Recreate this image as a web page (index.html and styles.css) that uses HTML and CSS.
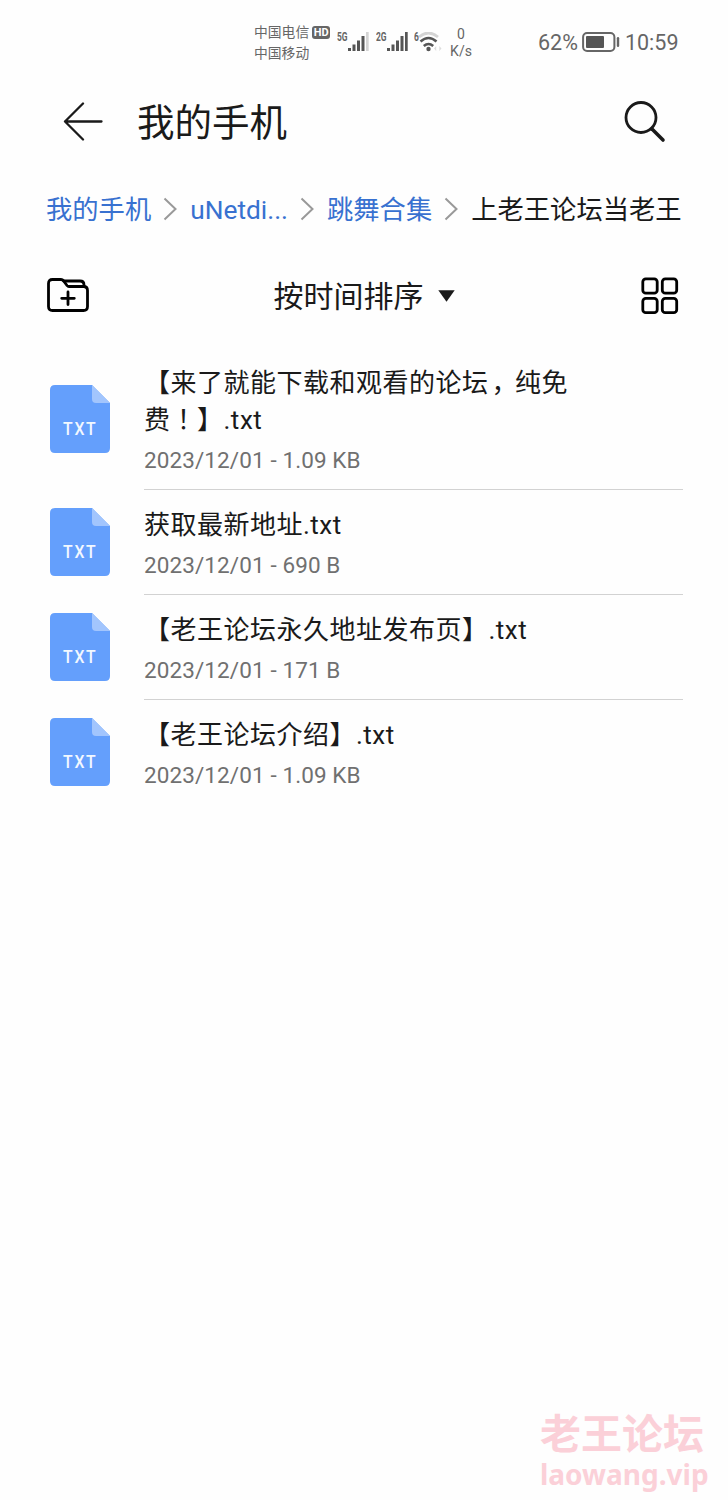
FILE: index.html
```
<!DOCTYPE html>
<html lang="zh-CN">
<head>
  <meta charset="UTF-8">
  <title>我的手机</title>
  <link rel="stylesheet" href="styles.css">
</head>
<body>

<div class="status-bar">
  <div class="carriers">
    <div class="carrier">中国电信<span class="hd">HD</span></div>
    <div class="carrier">中国移动</div>
  </div>
  <div class="signal">
    <span class="net">5G</span>
    <svg width="22" height="20" viewBox="0 0 22 20">
      <path d="M0 16h3v3H0zM4.500 12.500h3V19h-3zM9 8.500h3V19H9zM13.500 4h3v15h-3z" fill="#555"/>
      <path d="M18 0h2.700v19H18z" fill="#d4d4d4"/>
    </svg>
  </div>
  <div class="signal signal-2">
    <span class="net">2G</span>
    <svg width="22" height="20" viewBox="0 0 22 20">
      <path d="M0 16h3v3H0zM4.500 12.500h3V19h-3zM9 8.500h3V19H9zM13.500 4h3v15h-3zM18 0h2.700v19H18z" fill="#555"/>
    </svg>
  </div>
  <div class="signal wifi">
    <span class="net">6</span>
    <svg width="24" height="20" viewBox="0 0 24 20">
      <path d="M1 5Q10.500-3 20 5" fill="none" stroke="#d4d4d4" stroke-width="2.800"/>
      <path d="M2.500 9.500Q10.500 2.500 18.500 9.500M5.800 14Q10.500 10 15.200 14" fill="none" stroke="#555" stroke-width="2.600"/>
      <circle cx="10.500" cy="17" r="2.200" fill="#555"/>
      <path d="M16 16.500l2.200-2.500v5zM23.500 16.500L21.300 14v5z" fill="#ddd"/>
    </svg>
  </div>
  <div class="speed">
    <div>0</div>
    <div>K/s</div>
  </div>
  <div class="battery">
    <span>62%</span>
    <svg width="38" height="20" viewBox="0 0 38 20">
      <rect x="1.100" y="1.100" width="31.300" height="17.800" rx="4" fill="none" stroke="#666" stroke-width="2"/>
      <rect x="4" y="4" width="18" height="12" rx="1" fill="#555"/>
      <rect x="34.800" y="5" width="2.400" height="10" rx="1.200" fill="#666"/>
    </svg>
    <span>10:59</span>
  </div>
</div>

<div class="header">
  <svg width="40" height="40" viewBox="0 0 40 40" fill="none" stroke="#1a1a1a" stroke-width="2.300" stroke-linecap="round" stroke-linejoin="round">
    <path d="M20 1.500L2 19.500l18 18M2 19.500h36.500"/>
  </svg>
  <h1>我的手机</h1>
  <svg width="44" height="44" viewBox="0 0 44 44" fill="none" stroke="#1a1a1a" stroke-linecap="round">
    <circle cx="18" cy="17.500" r="15" stroke-width="2.800"/>
    <path d="M29 29l11 11" stroke-width="3.600"/>
  </svg>
</div>

<div class="breadcrumb">
  <a>我的手机</a>
  <svg class="chevron" viewBox="0 0 14 24"><path d="M1.500 1.500L12.500 12l-11 10.500"/></svg>
  <a>uNetdi...</a>
  <svg class="chevron" viewBox="0 0 14 24"><path d="M1.500 1.500L12.500 12l-11 10.500"/></svg>
  <a>跳舞合集</a>
  <svg class="chevron" viewBox="0 0 14 24"><path d="M1.500 1.500L12.500 12l-11 10.500"/></svg>
  <span>上老王论坛当老王</span>
</div>

<div class="toolbar">
  <svg width="44" height="36" viewBox="0 0 44 36" fill="none" stroke="#000" stroke-width="2.800" stroke-linecap="round" stroke-linejoin="round">
    <path d="M5.500 1.500H14q1.500 0 2.500 1.200L20 7.500q.8 1 2 1h14.500q4 0 4 4v16q0 4-4 4h-31q-4 0-4-4v-23q0-4 4-4z"/>
    <path d="M16.500 3H33q4 0 4 4v1.500"/>
    <path d="M21 14v12.600M14.700 20.300h12.600"/>
  </svg>
  <div class="sort">
    <span>按时间排序</span>
    <svg width="17" height="12" viewBox="0 0 17 12"><path d="M.3.300h16.400L8.500 11.700z" fill="#1a1a1a"/></svg>
  </div>
  <svg width="38" height="38" viewBox="0 0 38 38" fill="none" stroke="#000" stroke-width="2.800">
    <rect x="1.800" y="1.800" width="14.400" height="14.400" rx="3"/>
    <rect x="21.300" y="1.800" width="14.400" height="14.400" rx="3"/>
    <rect x="1.800" y="21.300" width="14.400" height="14.400" rx="3"/>
    <rect x="21.300" y="21.300" width="14.400" height="14.400" rx="3"/>
  </svg>
</div>

<div class="file-list">
  <div class="file">
    <svg class="file-icon" viewBox="0 0 60 68">
      <path d="M5 0h37l18 18v45q0 5-5 5H5q-5 0-5-5V5q0-5 5-5z" fill="#649ffc"/>
      <path d="M42 0l18 18H46q-4 0-4-4z" fill="#a2c5fd"/>
      <text x="13" y="50" textLength="34.500" lengthAdjust="spacingAndGlyphs">TXT</text>
    </svg>
    <div class="info">
      <div class="name">【来了就能下载和观看的论坛<span class="punct comma">，</span>纯免<br>费<span class="punct">！</span>】.txt</div>
      <div class="meta">2023/12/01 - 1.09 KB</div>
    </div>
  </div>
  <div class="file">
    <svg class="file-icon" viewBox="0 0 60 68">
      <path d="M5 0h37l18 18v45q0 5-5 5H5q-5 0-5-5V5q0-5 5-5z" fill="#649ffc"/>
      <path d="M42 0l18 18H46q-4 0-4-4z" fill="#a2c5fd"/>
      <text x="13" y="50" textLength="34.500" lengthAdjust="spacingAndGlyphs">TXT</text>
    </svg>
    <div class="info">
      <div class="name">获取最新地址.txt</div>
      <div class="meta">2023/12/01 - 690 B</div>
    </div>
  </div>
  <div class="file">
    <svg class="file-icon" viewBox="0 0 60 68">
      <path d="M5 0h37l18 18v45q0 5-5 5H5q-5 0-5-5V5q0-5 5-5z" fill="#649ffc"/>
      <path d="M42 0l18 18H46q-4 0-4-4z" fill="#a2c5fd"/>
      <text x="13" y="50" textLength="34.500" lengthAdjust="spacingAndGlyphs">TXT</text>
    </svg>
    <div class="info">
      <div class="name">【老王论坛永久地址发布页】.txt</div>
      <div class="meta">2023/12/01 - 171 B</div>
    </div>
  </div>
  <div class="file">
    <svg class="file-icon" viewBox="0 0 60 68">
      <path d="M5 0h37l18 18v45q0 5-5 5H5q-5 0-5-5V5q0-5 5-5z" fill="#649ffc"/>
      <path d="M42 0l18 18H46q-4 0-4-4z" fill="#a2c5fd"/>
      <text x="13" y="50" textLength="34.500" lengthAdjust="spacingAndGlyphs">TXT</text>
    </svg>
    <div class="info">
      <div class="name">【老王论坛介绍】.txt</div>
      <div class="meta">2023/12/01 - 1.09 KB</div>
    </div>
  </div>
</div>

<div class="watermark">
  <div class="wm-name">老王论坛</div>
  <div class="wm-url">laowang.vip</div>
</div>

</body>
</html>
```
FILE: styles.css
```
* { box-sizing: border-box; }
body { margin: 0; height: 1500px; position: relative; overflow: hidden; background: #fefefe; color: #1a1a1a; font-family: Roboto, "Noto Sans CJK SC", sans-serif; }
svg { display: block; flex-shrink: 0; }

.status-bar { display: flex; align-items: center; height: 84px; padding-left: 254px; color: #666; }
.carriers { width: 83px; padding-top: 2px; font-size: 13.8px; line-height: 21px; }
.carrier { display: flex; align-items: center; height: 21px; white-space: nowrap; }
.hd { width: 18px; height: 13px; margin-left: 3px; border-radius: 3px; background: #666; color: #fff; font-size: 11px; font-weight: bold; line-height: 13px; text-align: center; }
.signal { display: flex; width: 39px; height: 20px; }
.net { width: 11px; height: 12px; font-size: 12px; font-weight: bold; line-height: 10px; transform: scaleX(0.7); transform-origin: left; }
.signal-2 { width: 38px; }
.wifi { width: 30px; }
.wifi .net { width: 4px; }
.speed { width: 34px; padding-top: 2px; font-size: 14px; line-height: 17px; text-align: center; }
.battery { display: flex; align-items: center; margin-left: 60px; font-size: 21.5px; }
.battery svg { margin: 0 5px 0 4px; }

.header { display: flex; align-items: center; height: 75px; padding: 0 61px 0 63px; }
.header h1 { flex: 1; margin: 0 0 0 34px; padding-top: 3px; font-size: 37.5px; font-weight: normal; line-height: 50px; }

.breadcrumb { display: flex; align-items: center; height: 99px; padding-left: 46px; font-size: 26.3px; line-height: 36px; white-space: nowrap; }
.breadcrumb a, .breadcrumb span { padding-top: 2px; }
.breadcrumb a { color: #3871d0; }
.chevron { width: 14px; height: 24px; margin: 0 13px 0 12px; fill: none; stroke: #999; stroke-width: 2; }

.toolbar { display: flex; align-items: center; justify-content: space-between; height: 76px; padding: 0 49px 0 47px; }
.sort { display: flex; align-items: center; margin-right: 4px; font-size: 30px; line-height: 40px; }
.sort span { padding-top: 2px; }
.sort svg { margin-left: 14px; }

.file-list { padding: 14px 45px 0 50px; }
.file { display: flex; align-items: center; }
.file-icon { width: 60px; height: 68px; margin: 0 34px 1px 0; }
.file-icon text { fill: #f2f8ff; font-size: 18px; font-weight: 500; letter-spacing: 2px; }
.info { flex: 1; padding: 17px 0 15px; border-bottom: 1px solid #d2d2d2; }
.file:last-child .info { border-bottom-color: transparent; }
.name { font-size: 26px; line-height: 37px; letter-spacing: 0.5px; white-space: nowrap; }
/* half-width forms centred in a full-width cell */
.punct { display: inline-block; width: 26.5px; text-align: center; font-feature-settings: "halt"; }
.comma { padding-right: 7px; }
.meta { margin-top: 7px; color: #707070; font-size: 22.5px; line-height: 28px; letter-spacing: 0.1px; }

.watermark { position: absolute; left: 540px; bottom: 9px; color: #fbd0d8; font-weight: bold; white-space: nowrap; }
.wm-name { font-size: 41px; line-height: 43px; }
.wm-url { font-family: "Noto Sans", sans-serif; font-size: 28px; line-height: 34px; }
```
